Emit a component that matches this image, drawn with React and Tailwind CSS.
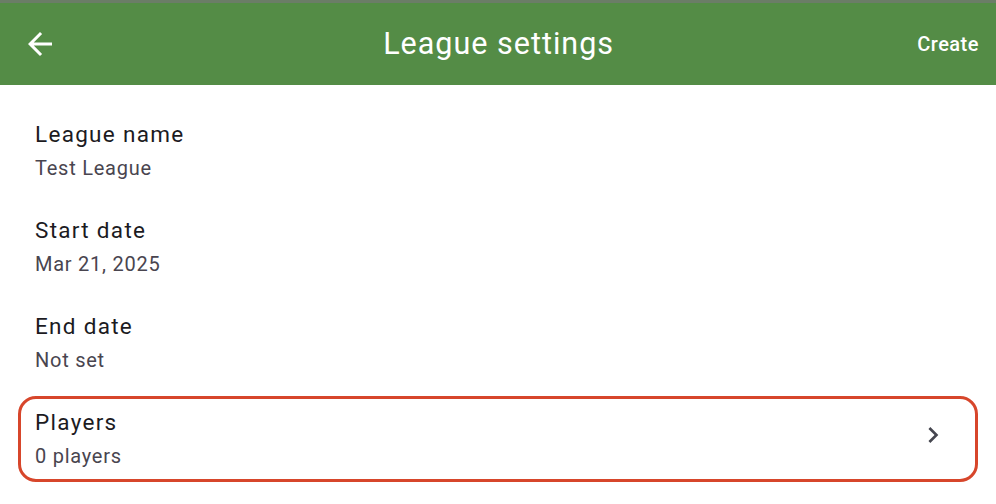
import React from "react";

const rows = [
  { label: "League name", value: "Test League" },
  { label: "Start date", value: "Mar 21, 2025" },
  { label: "End date", value: "Not set" },
  { label: "Players", value: "0 players", link: true },
];

export default function App() {
  return (
    <div className="w-[996px] h-[504px] overflow-hidden bg-white font-['Roboto',sans-serif]">
      <div className="h-[3px] bg-[#6b7d67]" />
      <header className="h-[82px] bg-[#548c46] flex items-center pl-[22px] pr-[17px]">
        <button className="w-[36px] h-[36px] flex items-center justify-center text-white">
          <svg width="36" height="36" viewBox="0 0 24 24" fill="currentColor">
            <path d="M20 11H7.83l5.59-5.59L12 4l-8 8 8 8 1.41-1.41L7.83 13H20v-2z" />
          </svg>
        </button>
        <h1 className="flex-1 text-center text-white text-[30.5px] leading-none tracking-[1px] pl-[22px]">
          League settings
        </h1>
        <span className="text-white text-[20px] font-medium tracking-[0.5px]">Create</span>
      </header>
      <div className="pt-[23px] px-[18px] flex flex-col gap-[10px]">
        {rows.map((r) => (
          <div
            key={r.label}
            className={
              "h-[86px] rounded-[18px] border-[3px] flex items-center pl-[14px] pr-[26px] " +
              (r.link ? "border-[#d7462b]" : "border-transparent")
            }
          >
            <div className="flex-1 mb-[3px]">
              <div className="text-[22.5px] leading-[28px] text-[#1c1b1f] tracking-[1.3px]">{r.label}</div>
              <div className="text-[20px] leading-[24px] mt-[8px] text-[#49454f] tracking-[0.75px]">{r.value}</div>
            </div>
            {r.link && (
              <svg width="32" height="32" viewBox="0 0 24 24" fill="#45464f" className="mb-[9px]">
                <path d="M10 6 8.59 7.41 13.17 12l-4.58 4.59L10 18l6-6z" />
              </svg>
            )}
          </div>
        ))}
      </div>
    </div>
  );
}
